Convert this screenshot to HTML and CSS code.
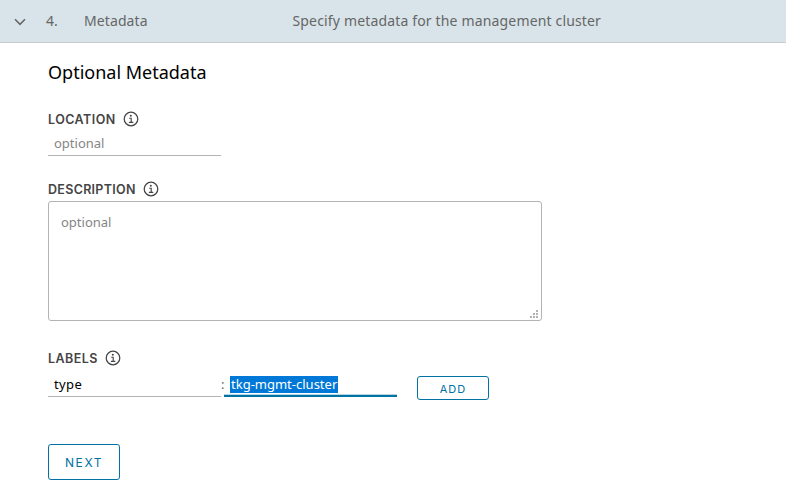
FILE: index.html
```html
<!DOCTYPE html>
<html lang="en">
<head>
<meta charset="utf-8">
<title>Metadata</title>
<link rel="stylesheet" href="styles.css">
</head>
<body>
<svg class="defs" width="0" height="0" aria-hidden="true">
  <symbol id="info" viewBox="0 0 16 16">
    <circle cx="8" cy="8" r="6.8" fill="none" stroke="#454545" stroke-width="1.25"/>
    <circle cx="7.8" cy="4.8" r="1" fill="#454545"/>
    <path d="M6.2 7.2h2v4M5.9 11.3h4.4" fill="none" stroke="#454545" stroke-width="1.15"/>
  </symbol>
</svg>
<header class="step">
  <svg class="caret" width="12" height="8" viewBox="0 0 12 8"><path d="M1 1.3l5 5 5-5" fill="none" stroke="#666" stroke-width="1.6"/></svg>
  <span class="number">4.</span>
  <span class="title">Metadata</span>
  <span class="summary">Specify metadata for the management cluster</span>
</header>
<main class="content">
  <h1 class="heading">Optional Metadata</h1>
  <section class="location">
    <div class="label"><span class="label-location">LOCATION</span><svg class="info"><use href="#info"/></svg></div>
    <div class="input placeholder">optional</div>
  </section>
  <section class="description">
    <div class="label"><span class="label-description">DESCRIPTION</span><svg class="info"><use href="#info"/></svg></div>
    <div class="textarea placeholder">optional
      <svg class="grip" width="8" height="8" viewBox="0 0 8 8" fill="#b3b3b3"><path d="M6 0h2v2H6zM3 3h2v2H3zM6 3h2v2H6zM0 6h2v2H0zM3 6h2v2H3zM6 6h2v2H6z"/></svg>
    </div>
  </section>
  <section class="labels">
    <div class="label"><span class="label-labels">LABELS</span><svg class="info"><use href="#info"/></svg></div>
    <div class="pair">
      <div class="input key">type</div>
      <span class="colon">:</span>
      <div class="input active"><span class="selected">tkg-mgmt-cluster</span></div>
      <button class="button add">ADD</button>
    </div>
  </section>
  <button class="button next">NEXT</button>
</main>
</body>
</html>
```

FILE: styles.css
```css
* { box-sizing: border-box; }
body {
  margin: 0;
  background: #fff;
  color: #000;
  font: 13px/20px "Noto Sans", sans-serif;
}
.defs { position: absolute; }
.step {
  display: flex;
  align-items: center;
  height: 43px;
  padding: 0 0 1px 14px;
  background: #d9e4ea;
  border-bottom: 1px solid #ccc;
  color: #666;
  font-size: 14px;
}
.caret { margin-top: 3px; }
.number { width: 38px; margin-left: 20px; }
.title { width: 208.5px; letter-spacing: .1px; }
.summary { letter-spacing: .16px; }
.content { padding: 0 48px; }
.heading {
  margin: 17px 0 0;
  font-size: 18px;
  line-height: 24px;
  font-weight: 400;
}
.location { margin-top: 25px; }
.description { margin-top: 23px; }
.labels { margin-top: 27px; }
.label {
  display: flex;
  align-items: center;
  height: 20px;
  color: #454545;
  font: 600 12.5px/20px Inter, sans-serif;
}
.label span { padding-top: 1px; }
.label-location { width: 68px; letter-spacing: .45px; }
.label-description { width: 88px; letter-spacing: .3px; }
.label-labels { width: 50px; letter-spacing: .45px; }
.info { width: 16px; height: 16px; margin-left: 7px; }
.input {
  width: 173px;
  height: 27px;
  padding: 4px 6px 0;
  border-bottom: 1px solid #b3b3b3;
  line-height: 20px;
}
.placeholder { color: #858585; }
.textarea {
  position: relative;
  width: 494px;
  height: 120px;
  margin-top: 2px;
  padding: 10px 12px;
  border: 1px solid #b3b3b3;
  border-radius: 3px;
}
.grip { position: absolute; right: 3px; bottom: 2px; }
.pair { display: flex; }
.pair .input { height: 29px; padding-top: 6px; }
.pair .key { letter-spacing: .4px; }
.colon { width: 3px; margin-top: 6px; color: #666; }
.pair .active {
  padding-top: 8px;
  line-height: 17px;
  border-bottom: 2px solid #0072a3;
  box-shadow: inset 0 -1px #b5d5e4;
}
.selected {
  display: block;
  width: 108px;
  height: 17px;
  padding-left: 1px;
  background: #0078d7;
  color: #fff;
  white-space: nowrap;
}
.button {
  display: flex;
  align-items: center;
  justify-content: center;
  padding: 0;
  width: 72px;
  border: 1px solid #0072a3;
  border-radius: 3px;
  background: #fff;
  color: #0072a3;
  font-family: Inter, sans-serif;
}
.add { height: 24px; margin: 8px 0 0 20px; font-size: 11px; letter-spacing: 1px; padding: 2px 0 0; }
.next { height: 36px; margin-top: 44px; font-size: 12px; letter-spacing: 1.6px; }
```
